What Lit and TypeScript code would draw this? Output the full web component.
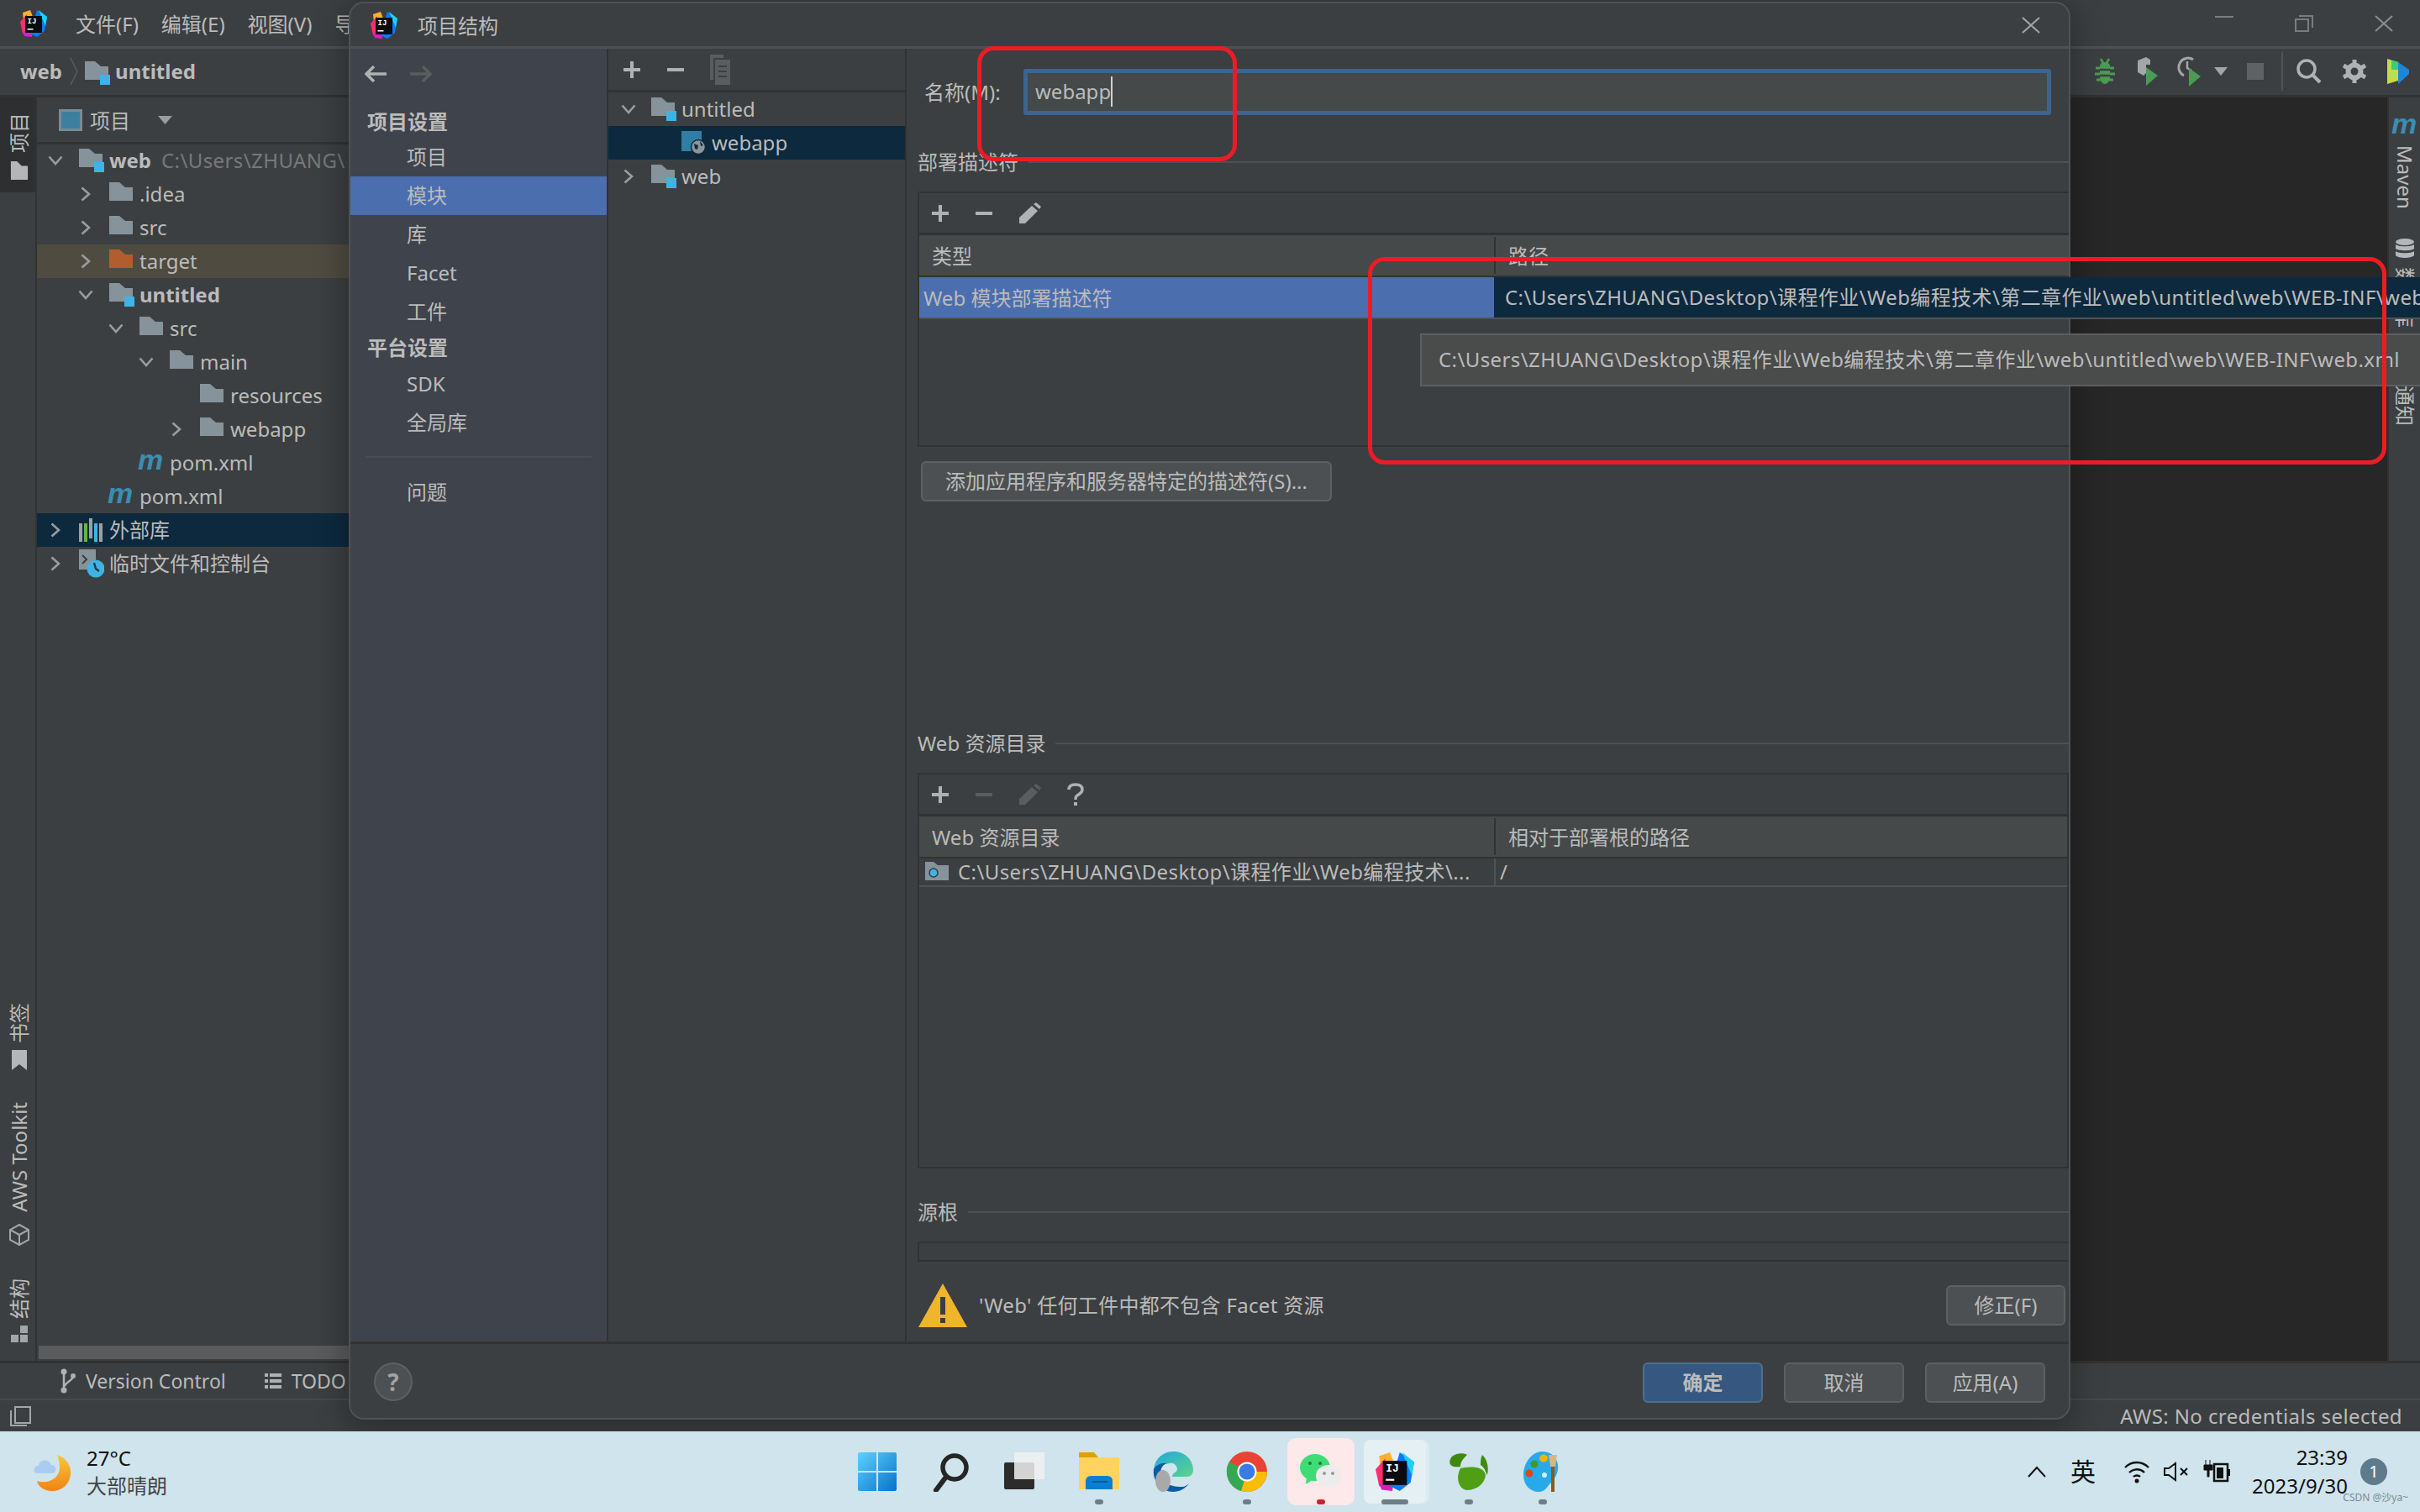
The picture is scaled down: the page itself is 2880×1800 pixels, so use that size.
import { LitElement, css, html } from 'lit';
import { customElement } from 'lit/decorators.js';

const PATH = 'C:\\Users\\ZHUANG\\Desktop\\课程作业\\Web编程技术\\第二章作业\\web\\untitled\\web\\WEB-INF\\web.xml';

type Chev = 'down' | 'right' | null;
interface Row {
  lvl: number;
  chev: Chev;
  icon: string;
  name: string;
  bold?: boolean;
  hint?: string;
  cls?: string;
}

const TREE: Row[] = [
  { lvl: 0, chev: 'down', icon: 'module', name: 'web', bold: true, hint: 'C:\\Users\\ZHUANG\\' },
  { lvl: 1, chev: 'right', icon: 'folder', name: '.idea' },
  { lvl: 1, chev: 'right', icon: 'folder', name: 'src' },
  { lvl: 1, chev: 'right', icon: 'orange', name: 'target', cls: 'ignored' },
  { lvl: 1, chev: 'down', icon: 'module', name: 'untitled', bold: true },
  { lvl: 2, chev: 'down', icon: 'folder', name: 'src' },
  { lvl: 3, chev: 'down', icon: 'folder', name: 'main' },
  { lvl: 4, chev: null, icon: 'folder', name: 'resources' },
  { lvl: 4, chev: 'right', icon: 'folder', name: 'webapp' },
  { lvl: 2, chev: null, icon: 'm', name: 'pom.xml' },
  { lvl: 1, chev: null, icon: 'm', name: 'pom.xml' },
  { lvl: 0, chev: 'right', icon: 'lib', name: '外部库', cls: 'picked' },
  { lvl: 0, chev: 'right', icon: 'scratch', name: '临时文件和控制台' },
];

const MODULES: Row[] = [
  { lvl: 0, chev: 'down', icon: 'module', name: 'untitled' },
  { lvl: 1, chev: null, icon: 'web', name: 'webapp', cls: 'picked' },
  { lvl: 0, chev: 'right', icon: 'module', name: 'web' },
];

const chevron = (c: Chev) => {
  if (c === 'down') {
    return html`<svg width="18" height="12" viewBox="0 0 18 12"><path d="M1.5 1.5 9 10l7.5-8.5" fill="none" stroke="#9a9da0" stroke-width="2.6"/></svg>`;
  }
  if (c === 'right') {
    return html`<svg width="12" height="18" viewBox="0 0 12 18"><path d="M1.5 1.5 10 9l-8.5 7.5" fill="none" stroke="#9a9da0" stroke-width="2.6"/></svg>`;
  }
  return null;
};

const folderPath = 'M0 0h12l7 6h9v16H0z';

const treeIcon = (name: string) => {
  switch (name) {
    case 'folder':
      return html`<svg width="30" height="28" viewBox="0 0 30 28"><path d=${folderPath} fill="#87939a"/></svg>`;
    case 'orange':
      return html`<svg width="30" height="28" viewBox="0 0 30 28"><path d=${folderPath} fill="#b35c2e"/></svg>`;
    case 'module':
      return html`<svg width="30" height="28" viewBox="0 0 30 28"><path d=${folderPath} fill="#87939a"/><rect x="18" y="16" width="12" height="12" fill="#3eb4e5"/></svg>`;
    case 'm':
      return html`<svg width="32" height="38" viewBox="0 0 32 38"><text x="0" y="27" font-family="Liberation Sans" font-size="34" font-weight="700" font-style="italic" fill="#3a8db3">m</text></svg>`;
    case 'lib':
      return html`<svg width="30" height="28" viewBox="0 0 30 28"><rect x="0" y="6" width="4" height="24" fill="#9aa0a4"/><rect x="6" y="6" width="4" height="24" fill="#62b543"/><rect x="12" y="0" width="4" height="24" fill="#9aa0a4"/><rect x="18" y="6" width="4" height="24" fill="#3eb4e5"/><rect x="24" y="6" width="4" height="24" fill="#9aa0a4"/></svg>`;
    case 'scratch':
      return html`<svg width="30" height="34" viewBox="0 0 30 34"><rect x="0" y="0" width="20" height="24" fill="#87939a"/><path d="M4 7l5 5-5 5" fill="none" stroke="#3c3f41" stroke-width="2"/><circle cx="20" cy="23" r="10.5" fill="#3eb4e5"/><path d="M18 16l2 7 4 3" fill="none" stroke="#23384a" stroke-width="2.4"/></svg>`;
    case 'web':
      return html`<svg width="30" height="28" viewBox="0 0 30 28"><rect x="0" y="0" width="24" height="24" fill="#2f7ea6"/><circle cx="20" cy="19" r="8.5" fill="#8b969c" stroke="#0d293e" stroke-width="1.5"/><path d="M15 15l5 2-1 5-3-1zM22 12l4 5-3 1z" fill="#0d293e"/></svg>`;
  }
  return null;
};

const ijLogo = (s: number) => html`<svg width=${s} height=${s} viewBox="0 0 32 32">
  <polygon points="3,3 12,0 15,8 4,13" fill="#ffb02e"/>
  <polygon points="0,14 8,5 9,28 3,28" fill="#fe2e6e"/>
  <polygon points="3,26 15,22 14,32 5,31" fill="#e01cc4"/>
  <polygon points="20,0 32,8 29,25 20,32 12,28" fill="#087cfa"/>
  <polygon points="22,0 32,8 30,19" fill="#21d0f5"/>
  <rect x="6" y="7" width="20" height="20" fill="#0b0b10"/>
  <text x="8.500" y="16" font-family="Liberation Mono" font-weight="700" font-size="9" fill="#fff">IJ</text>
  <rect x="8.500" y="22" width="7" height="1.500" fill="#fff"/>
</svg>`;

const plus = (c = '#afb1b3') => html`<svg width="22" height="22" viewBox="0 0 22 22"><path d="M11 1v20M1 11h20" stroke=${c} stroke-width="4"/></svg>`;
const minus = (c = '#afb1b3') => html`<svg width="22" height="22" viewBox="0 0 22 22"><path d="M1 11h20" stroke=${c} stroke-width="4"/></svg>`;
const pencil = (c = '#afb1b3') => html`<svg width="28" height="26" viewBox="0 0 28 26"><path d="M1 25v-7L16 4l7 6L8 25zM18 2l3-2 6 5-2 3z" fill=${c}/></svg>`;

@customElement('app-root')
export class AppRoot extends LitElement {
  static styles = css`
    :host {
      display: block;
      width: 2880px;
      height: 1800px;
      overflow: hidden;
      font-family: 'Noto Sans', 'Noto Sans CJK SC', sans-serif;
      font-size: 24px;
      line-height: 1;
      color: #bbbbbb;
    }
    svg { display: block; flex: none; }

    .ide {
      position: relative;
      height: 1704px;
      overflow: hidden;
      display: flex;
      flex-direction: column;
      background: #3c3f41;
    }
    .titlebar {
      height: 55px;
      flex: none;
      border-bottom: 3px solid #4e5052;
      display: flex;
      align-items: center;
      padding-left: 24px;
    }
    .menus { display: flex; gap: 27px; margin-left: 34px; padding-top: 2px; }
    .winctl { margin-left: auto; display: flex; margin-right: -4px; }
    .winctl div { width: 95px; display: flex; justify-content: center; }
    .navbar {
      height: 53px;
      padding-bottom: 2px;
      flex: none;
      border-bottom: 3px solid #323232;
      display: flex;
      align-items: center;
      padding-left: 24px;
      font-weight: 700;
    }
    .navbar .sep { margin: 0 8px 0 9px; }
    .navbar .mod { margin-right: 6px; margin-top: 4px; }
    .tools { margin-left: auto; display: flex; align-items: center; }
    .tools div { display: flex; justify-content: center; align-items: center; }

    .main { flex: 1; display: flex; min-height: 0; }
    .lstripe {
      width: 38px;
      padding-left: 4px;
      flex: none;
      border-right: 2px solid #323232;
      display: flex;
      flex-direction: column;
      align-items: center;
      font-size: 24px;
    }
    .lstripe .active {
      width: 42px;
      margin-left: -4px;
      padding-left: 4px;
      height: 113px;
      background: #2d2f30;
      display: flex;
      flex-direction: column;
      align-items: center;
      padding-top: 18px;
      box-sizing: border-box;
      gap: 10px;
    }
    .vtext {
      writing-mode: vertical-rl;
      text-orientation: sideways;
      transform: rotate(180deg);
      white-space: nowrap;
    }
    .lbottom {
      margin-top: auto;
      display: flex;
      flex-direction: column;
      align-items: center;
      padding-bottom: 22px;
    }
    .lbottom .gap-s { margin-top: 8px; }
    .lbottom .gap-m { margin-top: 13px; }
    .lbottom .gap-l { margin-top: 38px; }
    .project { width: 400px; flex: none; display: flex; flex-direction: column; }
    .phead {
      height: 53px;
      flex: none;
      border-bottom: 3px solid #323232;
      display: flex;
      align-items: center;
      padding-left: 26px;
      gap: 9px;
    }
    .phead span { padding-top: 2px; }
    .phead svg:last-child { margin-left: 24px; }
    .ptree { flex: 1; min-height: 0; overflow: hidden; margin-top: -1px; }
    .row {
      height: 40px;
      display: flex;
      align-items: center;
      white-space: nowrap;
      box-sizing: border-box;
    }
    .row .slot {
      width: 36px;
      flex: none;
      display: flex;
      justify-content: center;
    }
    .row .ic { margin: 0 6px 0 10px; flex: none; width: 30px; display: flex; justify-content: flex-start; }
    .row .ic.m { margin-left: 8px; margin-right: 8px; }
    .row b { font-weight: 700; }
    .row i { font-style: normal; color: #787878; margin-left: 12px; letter-spacing: 0.4px; }
    .row.picked { background: #0d293e; }
    .row.ignored { background: #4f4b41; }
    .ptree .row { padding-left: 4px; }
    .scrollbar { height: 16px; flex: none; margin: 0 0 2px 2px; background: #595b5d; }
    .editor { flex: 1; background: #272727; }
    .rstripe {
      width: 37px;
      flex: none;
      border-left: 2px solid #323232;
      display: flex;
      flex-direction: column;
      align-items: center;
      padding-top: 16px;
      font-size: 24px;
    }
    .rtext { writing-mode: vertical-rl; text-orientation: sideways; white-space: nowrap; }
    .rstripe .maven { margin-top: 3px; }
    .rstripe .db { margin-top: 35px; }
    .rstripe .dbname { margin-top: 10px; height: 86px; overflow: hidden; }
    .rstripe .notice { margin-top: 55px; }
    .bottombar {
      height: 42px;
      flex: none;
      border-top: 3px solid #323232;
      display: flex;
      align-items: center;
      padding-left: 72px;
      font-size: 23px;
    }
    .bottombar .lab { margin-left: 12px; margin-right: 46px; }
    .statusbar {
      height: 37px;
      flex: none;
      border-top: 2px solid #484a4c;
      display: flex;
      align-items: center;
      justify-content: space-between;
      padding: 0 21px 0 12px;
      letter-spacing: 0.4px;
    }

    /* dialog */
    .dialog {
      position: absolute;
      left: 415px;
      top: 2px;
      width: 2049px;
      height: 1688px;
      box-sizing: border-box;
      background: #3c3f41;
      border: 2px solid #4f5153;
      border-radius: 18px;
      box-shadow: 0 6px 34px 6px rgba(0, 0, 0, 0.28);
      overflow: hidden;
      display: flex;
      flex-direction: column;
    }
    .dtitle {
      height: 51px;
      flex: none;
      border-bottom: 3px solid #4e5052;
      display: flex;
      align-items: center;
      padding-left: 24px;
      gap: 24px;
    }
    .dtitle span { padding-top: 2px; }
    .dtitle .x { margin-left: auto; margin-right: 34px; }
    .dbody {
      flex: 1;
      min-height: 0;
      display: grid;
      grid-template-columns: 307px 355px 1fr;
    }
    .nav {
      background: #3f434c;
      border-right: 2px solid #323232;
      box-sizing: content-box;
      width: 305px;
    }
    .navtop { height: 60px; display: flex; align-items: center; gap: 28px; padding-left: 17px; }
    .nav h4 { margin: 0; font-size: 24px; font-weight: 700; height: 40px; line-height: 40px; padding-left: 20px; }
    .nav a { display: block; height: 46px; line-height: 46px; padding-left: 67px; }
    .nav a.on { background: #4b6eaf; }
    .nav h4.first { margin-top: 8px; height: 38px; line-height: 38px; }
    .nav hr { border: 0; border-top: 2px solid #494c52; margin: 17px 18px 18px 18px; }
    .modules { border-right: 2px solid #323232; }
    .modbar {
      height: 49px;
      border-bottom: 3px solid #323232;
      display: flex;
      align-items: center;
      gap: 30px;
      padding-left: 17px;
    }
    .modules .row .ic { margin: 0 6px 0 9px; }
    .modules .row { padding-left: 6px; }
    .modules .row.picked { padding-left: 2px; }
    .modules .row.picked .ic { margin-left: 13px; margin-right: 6px; }
    .content { display: flex; flex-direction: column; padding: 24px 0 0 13px; min-width: 0; }
    .namerow { display: flex; align-items: center; height: 55px; margin-left: 8px; }
    .namerow label { width: 118px; flex: none; }
    .input {
      width: 1223px;
      height: 55px;
      box-sizing: border-box;
      background: #45494a;
      border: 5px solid #3c6491;
      border-radius: 3px;
      display: flex;
      align-items: center;
      padding: 0 0 2px 9px;
    }
    .input span { border-right: 2px solid #d0d0d0; line-height: 36px; }
    .section { display: flex; align-items: center; gap: 12px; height: 36px; flex: none; }
    .section::after { content: ''; flex: 1; border-top: 2px solid #4e5052; }
    .s1 { margin-top: 38px; }
    .s2 { margin-top: 270px; }
    .s3 { margin-top: 34px; }
    .panel {
      margin-top: 17px;
      border: solid #323232;
      border-width: 2px 0 2px 2px;
      box-sizing: border-box;
      flex: none;
    }
    .p1 { height: 304px; }
    .p2 { height: 471px; border-right-width: 2px; }
    .p3 { height: 24px; }
    .tbar {
      height: 47px;
      border-bottom: 3px solid #323232;
      display: flex;
      align-items: center;
      padding-left: 14px;
      gap: 30px;
    }
    .thead {
      height: 48px;
      display: grid;
      grid-template-columns: 684px 1fr;
      background: #45494a;
      border-bottom: 2px solid #323232;
      align-items: center;
    }
    .thead div { padding: 2px 0 0 15px; }
    .thead div + div { border-left: 2px solid #323232; height: 44px; line-height: 42px; box-sizing: border-box; }
    .trow {
      height: 48px;
      display: grid;
      grid-template-columns: 684px 1fr;
      align-items: center;
      border-bottom: 2px solid #505355;
    }
    .trow .sel { background: #4b6eaf; height: 100%; box-sizing: border-box; display: flex; align-items: center; padding: 2px 0 0 5px; }
    .trow .dark { background: #0d293e; height: 100%; }
    .trow2 {
      height: 32px;
      display: grid;
      grid-template-columns: 684px 1fr;
      align-items: center;
      border-bottom: 2px solid #505355;
      white-space: nowrap;
    }
    .trow2 .cell { display: flex; align-items: center; gap: 9px; padding-left: 7px; }
    .trow2 .cell span { letter-spacing: 0.4px; }
    .trow2 .cell + .cell { padding-left: 5px; border-left: 2px solid #505355; height: 100%; }
    .btn {
      height: 48px;
      box-sizing: border-box;
      background: #4c5052;
      border: 2px solid #5e6060;
      border-radius: 6px;
      display: flex;
      align-items: center;
      justify-content: center;
      white-space: nowrap;
    }
    .btn.add { width: 489px; margin: 17px 0 0 4px; flex: none; }
    .btn.main-btn { background: #365880; border-color: #4c708c; font-weight: 700; }
    .warn { display: flex; align-items: center; margin-top: 25px; height: 53px; flex: none; }
    .warn span { margin-left: 13px; letter-spacing: 0.3px; }
    .warn .btn { margin-left: auto; margin-right: 4px; width: 142px; }
    .dfoot {
      height: 91px;
      flex: none;
      border-top: 3px solid #323232;
      display: flex;
      align-items: flex-start;
      padding: 22px 28px 0 28px;
      box-sizing: border-box;
      gap: 25px;
    }
    .dfoot .btn { width: 143px; }
    .dfoot .help {
      width: 46px;
      height: 46px;
      box-sizing: border-box;
      border-radius: 50%;
      background: #4c5052;
      border: 2px solid #5e6060;
      display: flex;
      align-items: center;
      justify-content: center;
      font-weight: 700;
      font-size: 28px;
      color: #a0a3a5;
      margin-right: auto;
    }

    /* overlays */
    .expand {
      position: absolute;
      left: 1779px;
      top: 330px;
      right: 0;
      height: 48px;
      background: #0d293e;
      border-bottom: 2px solid #505355;
      display: flex;
      align-items: center;
      padding-left: 12px;
      white-space: nowrap;
      overflow: hidden;
      box-sizing: content-box;
      letter-spacing: 0.4px;
    }
    .tip {
      position: absolute;
      left: 1690px;
      top: 397px;
      right: 0;
      height: 63px;
      box-sizing: border-box;
      background: #4a4b4b;
      border: 2px solid #5e5e5e;
      border-right: 0;
      display: flex;
      align-items: center;
      padding: 0 0 2px 20px;
      white-space: nowrap;
      letter-spacing: 0.4px;
    }
    .mark {
      position: absolute;
      box-sizing: border-box;
      border: 5px solid #ed1c24;
      border-radius: 20px;
    }
    .m1 { left: 1163px; top: 55px; width: 309px; height: 137px; }
    .m2 { left: 1628px; top: 306px; width: 1212px; height: 247px; }

    /* taskbar */
    .taskbar {
      height: 96px;
      background: #cfe4ec;
      display: grid;
      grid-template-columns: 1fr 880px 1fr;
      align-items: stretch;
      color: #111;
    }
    .weather { display: flex; align-items: center; padding-left: 40px; gap: 18px; }
    .weather .lines { display: flex; flex-direction: column; gap: 9px; }
    .weather .sub { color: #444; }
    .apps { display: grid; grid-template-columns: repeat(10, 88px); }
    .app {
      position: relative;
      display: flex;
      align-items: center;
      justify-content: center;
    }
    .app.wechat::before {
      content: '';
      position: absolute;
      left: 4px;
      right: 4px;
      top: 8px;
      bottom: 8px;
      background: #fde8ea;
      border-radius: 10px;
    }
    .app.idea::before {
      content: '';
      position: absolute;
      left: 7px;
      right: 7px;
      top: 10px;
      bottom: 10px;
      background: #e4f0f4;
      border-radius: 8px;
      box-shadow: 4px 0 0 #dcebf1;
    }
    .app svg { position: relative; }
    .dot {
      position: absolute;
      bottom: 9px;
      left: 50%;
      width: 10px;
      height: 6px;
      margin-left: -5px;
      border-radius: 3px;
      background: #6f7d85;
    }
    .dot.red { background: #c4262e; }
    .dot.wide { width: 32px; margin-left: -16px; }
    .tray { display: flex; align-items: center; justify-content: flex-end; padding-right: 39px; position: relative; }
    .tray .ying { font-size: 30px; margin: 0 33px 0 28px; }
    .tray .speaker { margin-left: 16px; }
    .tray .batt { margin-left: 17px; }
    .tray .clock { display: flex; flex-direction: column; align-items: flex-end; gap: 10px; margin: 0 15px 0 26px; }
    .tray .badge {
      width: 32px;
      height: 32px;
      border-radius: 50%;
      background: #5f7a8b;
      color: #fff;
      display: flex;
      align-items: center;
      justify-content: center;
      font-size: 20px;
    }
    .tray .wm {
      position: absolute;
      right: 14px;
      bottom: 11px;
      font-size: 12px;
      color: #7d8a91;
    }
  `;

  renderRow(r: Row) {
    const step = 36 * r.lvl;
    const m = r.icon === 'm';
    return html`<div class="row ${r.cls ?? ''}">
      <div style="width:${step}px;flex:none"></div>
      <div class="slot">${chevron(r.chev)}</div>
      <div class="ic ${m ? 'm' : ''}">${treeIcon(r.icon)}</div>
      ${r.bold ? html`<b>${r.name}</b>` : html`<span>${r.name}</span>`}
      ${r.hint ? html`<i>${r.hint}</i>` : null}
    </div>`;
  }

  renderTools() {
    const slots: [number, unknown][] = [
      [50, html`<svg width="26" height="32" viewBox="0 0 26 32"><path d="M8 1l3 5M18 1l-3 5" stroke="#499c54" stroke-width="2.500"/><path d="M13 5c4 0 6 2 6 5v12c0 5-3 9-6 9s-6-4-6-9V10c0-3 2-5 6-5z" fill="#499c54"/><path d="M2 12h5M19 12h5M1 19h6M19 19h6M3 26h5M18 26h5" stroke="#499c54" stroke-width="3"/><path d="M7 14h12M7 21h12" stroke="#3c3f41" stroke-width="2.500"/></svg>`],
      [52, html`<svg width="28" height="38" viewBox="0 0 28 38"><path d="M2 6l10-4 5 3v6h-5v10l-3 3-7-4z" fill="#a3a6a8"/><path d="M12 14l14 10-14 12z" fill="#499c54"/></svg>`],
      [48, html`<svg width="30" height="38" viewBox="0 0 30 38"><path d="M19 5A11 11 0 1 0 8 24" fill="none" stroke="#a3a6a8" stroke-width="3"/><path d="M12 7v8l5 3" fill="none" stroke="#a3a6a8" stroke-width="2.500"/><path d="M14 15l14 10-14 12z" fill="#499c54"/></svg>`],
      [26, html`<svg width="16" height="10" viewBox="0 0 16 10"><path d="M0 0h16L8 10z" fill="#a3a6a8"/></svg>`],
      [56, html`<svg width="20" height="20" viewBox="0 0 20 20"><rect width="20" height="20" fill="#5f6163"/></svg>`],
      [8, html`<svg width="2" height="46" viewBox="0 0 2 46"><rect width="2" height="46" fill="#515355"/></svg>`],
      [56, html`<svg width="32" height="32" viewBox="0 0 32 32"><circle cx="13" cy="13" r="10" fill="none" stroke="#afb1b3" stroke-width="3.500"/><path d="M20 20l9 9" stroke="#afb1b3" stroke-width="4"/></svg>`],
      [52, html`<svg width="28" height="28" viewBox="0 0 28 28"><circle cx="14" cy="14" r="7.500" fill="none" stroke="#afb1b3" stroke-width="6"/><path d="M14 0v6M14 22v6M1 7l5 3M22 18l5 3M1 21l5-3M22 10l5-3" stroke="#afb1b3" stroke-width="5"/></svg>`],
      [52, html`<svg width="28" height="30" viewBox="0 0 28 30"><path d="M1 0 14 4v22L1 30z" fill="#c2dc4a"/><path d="M14 4l13 9v5L14 30z" fill="#1c87d9"/><path d="M6 2l8 2v9H6z" fill="#3ec97c"/></svg>`],
    ];
    return html`<div class="tools">${slots.map(([w, ic]) => html`<div style="width:${w}px">${ic}</div>`)}</div>`;
  }

  renderApps() {
    return html`<div class="apps">
      <div class="app"><svg width="46" height="46" viewBox="0 0 46 46">
        <defs><linearGradient id="win" x1="0" y1="0" x2="1" y2="1"><stop offset="0" stop-color="#5fd2ff"/><stop offset="1" stop-color="#0672c9"/></linearGradient></defs>
        <path d="M0 2a2 2 0 0 1 2-2h20v22H0zM24 0h20a2 2 0 0 1 2 2v20H24zM0 24h22v22H2a2 2 0 0 1-2-2zM24 24h22v20a2 2 0 0 1-2 2H24z" fill="url(#win)"/></svg></div>
      <div class="app"><svg width="46" height="48" viewBox="0 0 46 48"><circle cx="27" cy="19" r="14" fill="none" stroke="#262626" stroke-width="5.500"/><path d="M17 30 5 46" stroke="#262626" stroke-width="6" stroke-linecap="round"/></svg></div>
      <div class="app"><svg width="50" height="46" viewBox="0 0 50 46"><rect x="0" y="12" width="36" height="32" rx="2" fill="#2c2c2c"/><rect x="12" y="0" width="36" height="32" rx="1" fill="#f1f1f1" opacity=".85"/></svg></div>
      <div class="app"><svg width="48" height="46" viewBox="0 0 48 46"><path d="M0 0h18l5 6H0z" fill="#dda200"/><rect x="0" y="6" width="48" height="38" rx="1" fill="#ffd35e"/><path d="M8 44V34c0-4 3-6 7-6h18c4 0 7 2 7 6v10z" fill="#0a7fd1"/><rect x="16" y="34" width="18" height="2" fill="#075a96"/></svg><div class="dot"></div></div>
      <div class="app"><svg width="50" height="50" viewBox="0 0 50 50">
        <defs><linearGradient id="edge" x1="0" y1="0" x2="1" y2="1"><stop offset="0" stop-color="#1fa8e0"/><stop offset="1" stop-color="#5fd38a"/></linearGradient></defs>
        <path d="M2 22C4 8 14 1 26 1c13 0 23 10 23 22 0 5-3 8-8 8H24c0-5 6-5 6-9 0-4-4-8-9-7-8 1-14 5-19 7z" fill="url(#edge)"/>
        <path d="M2 22c3-5 9-8 15-7-6 3-8 9-6 15 2 8 12 14 25 13 3 0 6-2 8-4-4 6-11 10-19 10C12 49 0 36 2 22z" fill="#0b5ca8"/>
        <ellipse cx="13" cy="36" rx="9" ry="13" fill="#a9a9a9"/></svg></div>
      <div class="app"><svg width="50" height="50" viewBox="0 0 50 50"><circle cx="25" cy="25" r="24" fill="#ea4335"/><path d="M25 25 4 13A24 24 0 0 0 18 48z" fill="#34a853"/><path d="M25 25 49 25A24 24 0 0 1 18 48z" fill="#fbbc04"/><circle cx="25" cy="25" r="11.500" fill="#fff"/><circle cx="25" cy="25" r="9.500" fill="#3b7ce4"/></svg><div class="dot"></div></div>
      <div class="app wechat"><svg width="50" height="44" viewBox="0 0 50 44"><ellipse cx="18" cy="17" rx="18" ry="16" fill="#3fdc75"/><path d="M8 28l-1 9 9-6z" fill="#3fdc75"/><ellipse cx="34" cy="27" rx="15" ry="13" fill="#ececec"/><path d="M40 37l4 6-10-4z" fill="#ececec"/><circle cx="12" cy="12" r="2" fill="#1e7a3f"/><circle cx="24" cy="12" r="2" fill="#1e7a3f"/><circle cx="29" cy="24" r="2" fill="#9a9a9a"/><circle cx="39" cy="24" r="2" fill="#9a9a9a"/></svg><div class="dot red"></div></div>
      <div class="app idea">${ijLogo(46)}<div class="dot wide"></div></div>
      <div class="app"><svg width="48" height="44" viewBox="0 0 48 44"><path d="M21 44C12 42 8 30 14 18c8-2 28-4 30 8-1 10-10 18-23 18z" fill="#4f9e14"/><path d="M14 16C0 18-1 10 4 4 8 0 18-1 22 2c-4 4-8 8-8 14zM38 14c0-4 0-8 2-12 6 6 8 14 6 24-2-4-4-10-8-12z" fill="#3f8a0e"/></svg><div class="dot"></div></div>
      <div class="app"><svg width="46" height="48" viewBox="0 0 46 48"><path d="M22 0C10 0 0 14 0 28c0 12 8 20 18 20 8 0 10-6 14-10 6-6 12-16 8-26C38 4 30 0 22 0z" fill="#28a9ea"/><circle cx="13" cy="15" r="4.500" fill="#3f9a2c"/><ellipse cx="24" cy="8" rx="5" ry="4.500" fill="#f1b500"/><circle cx="7" cy="26" r="4.500" fill="#d8491f"/><circle cx="25" cy="28" r="3" fill="#d6ecf7"/><rect x="33" y="18" width="4" height="30" fill="#8a5a1c"/><path d="M30 4h10l-2 14h-6z" fill="#d9b778"/></svg><div class="dot"></div></div>
    </div>`;
  }

  render() {
    return html`
      <div class="ide">
        <div class="titlebar">
          ${ijLogo(32)}
          <div class="menus"><span>文件(F)</span><span>编辑(E)</span><span>视图(V)</span><span>导</span></div>
          <div class="winctl">
            <div><svg width="22" height="4" viewBox="0 0 22 4"><rect width="22" height="2" y="1" fill="#7a7c7e"/></svg></div>
            <div><svg width="22" height="20" viewBox="0 0 22 20"><path d="M5 1h16v14M1 5h15v14H1z" fill="none" stroke="#7a7c7e" stroke-width="2"/></svg></div>
            <div><svg width="22" height="20" viewBox="0 0 22 20"><path d="M1 1l20 18M21 1 1 19" stroke="#8b8d8f" stroke-width="2"/></svg></div>
          </div>
        </div>
        <div class="navbar">
          <span>web</span>
          <svg class="sep" width="10" height="32" viewBox="0 0 10 32"><path d="M1 0l8 16-8 16" fill="none" stroke="#5a5d5f" stroke-width="1.500"/></svg>
          <span class="mod">${treeIcon('module')}</span>
          <span>untitled</span>
          ${this.renderTools()}
        </div>
        <div class="main">
          <div class="lstripe">
            <div class="active">
              <span class="vtext">项目</span>
              <svg width="22" height="22" viewBox="0 0 24 24"><path d="M1 0h8l6 6h8v18H1z" fill="#b4b6b8"/></svg>
            </div>
            <div class="lbottom">
              <span class="vtext">书签</span>
              <svg class="gap-s" width="18" height="24" viewBox="0 0 18 24"><path d="M0 0h18v24l-9-7-9 7z" fill="#b4b6b8"/></svg>
              <span class="vtext gap-l">AWS Toolkit</span>
              <svg class="gap-m" width="26" height="28" viewBox="0 0 26 28"><path d="M13 2l11 6v12l-11 6-11-6V8zM2 8l11 6 11-6M13 14v12" fill="none" stroke="#a3a6a8" stroke-width="2"/></svg>
              <span class="vtext gap-l">结构</span>
              <svg class="gap-s" width="20" height="20" viewBox="0 0 20 20"><path d="M11 0h9v9h-9zM0 11h9v9H0zM11 11h9v9h-9z" fill="#a3a6a8"/></svg>
            </div>
          </div>
          <div class="project">
            <div class="phead">
              <svg width="28" height="26" viewBox="0 0 28 26"><rect x="1.500" y="1.500" width="25" height="23" fill="#3d7f9f" stroke="#7b8a93" stroke-width="3"/></svg>
              <span>项目</span>
              <svg width="17" height="10" viewBox="0 0 17 10"><path d="M0 0h17l-8.500 10z" fill="#9a9da0"/></svg>
            </div>
            <div class="ptree">${TREE.map((r) => this.renderRow(r))}</div>
            <div class="scrollbar"></div>
          </div>
          <div class="editor"></div>
          <div class="rstripe">
            ${treeIcon('m')}
            <span class="rtext maven">Maven</span>
            <svg class="db" width="26" height="24" viewBox="0 0 26 24"><ellipse cx="13" cy="4" rx="11" ry="4" fill="#b4b6b8"/><path d="M2 7c3 3 19 3 22 0v5c-3 3-19 3-22 0zM2 15c3 3 19 3 22 0v5c-3 4-19 4-22 0z" fill="#b4b6b8"/></svg>
            <span class="rtext dbname">数据库</span>
            <span class="rtext notice">通知</span>
          </div>
        </div>
        <div class="bottombar">
          <svg width="18" height="30" viewBox="0 0 18 30"><circle cx="4" cy="4" r="3.500" fill="#afb1b3"/><circle cx="4" cy="26" r="3.500" fill="#afb1b3"/><circle cx="15" cy="9" r="3" fill="#afb1b3"/><path d="M4 4v22M15 9c0 6-8 6-10 12" fill="none" stroke="#afb1b3" stroke-width="2.500"/></svg>
          <span class="lab">Version Control</span>
          <svg width="20" height="22" viewBox="0 0 20 22"><path d="M0 2h4v4H0zM6 2h14v4H6zM0 9h4v4H0zM6 9h14v4H6zM0 16h4v4H0zM6 16h14v4H6z" fill="#afb1b3"/></svg>
          <span class="lab">TODO</span>
        </div>
        <div class="statusbar">
          <svg width="26" height="24" viewBox="0 0 26 24"><path d="M6 1h18v19H6zM1 5v18h19" fill="none" stroke="#a3a6a8" stroke-width="2"/></svg>
          <span>AWS: No credentials selected</span>
        </div>

        <div class="dialog">
          <div class="dtitle">
            ${ijLogo(32)}
            <span>项目结构</span>
            <svg class="x" width="22" height="20" viewBox="0 0 22 20"><path d="M1 1l20 18M21 1 1 19" stroke="#a3a6a8" stroke-width="2"/></svg>
          </div>
          <div class="dbody">
            <div class="nav">
              <div class="navtop">
                <svg width="26" height="20" viewBox="0 0 26 20"><path d="M26 10H3M11 1 2 10l9 9" fill="none" stroke="#afb1b3" stroke-width="3.500"/></svg>
                <svg width="26" height="20" viewBox="0 0 26 20"><path d="M0 10h23M15 1l9 9-9 9" fill="none" stroke="#5a5d5f" stroke-width="3.500"/></svg>
              </div>
              <h4 class="first">项目设置</h4>
              <a>项目</a>
              <a class="on">模块</a>
              <a>库</a>
              <a>Facet</a>
              <a>工件</a>
              <h4>平台设置</h4>
              <a>SDK</a>
              <a>全局库</a>
              <hr />
              <a>问题</a>
            </div>
            <div class="modules">
              <div class="modbar">
                ${plus()} ${minus()}
                <svg width="24" height="36" viewBox="0 0 24 36"><path d="M0 0h16v4H4v26H0z" fill="#5a5d5f"/><path d="M6 6h18v30H6z" fill="#5a5d5f"/><path d="M10 14h10M10 20h10M10 26h10" stroke="#3c3f41" stroke-width="2"/></svg>
              </div>
              ${MODULES.map((r) => this.renderRow(r))}
            </div>
            <div class="content">
              <div class="namerow">
                <label>名称(M):</label>
                <div class="input"><span>webapp</span></div>
              </div>
              <div class="section s1">部署描述符</div>
              <div class="panel p1">
                <div class="tbar">${plus()} ${minus()} ${pencil()}</div>
                <div class="thead"><div>类型</div><div>路径</div></div>
                <div class="trow"><div class="sel">Web 模块部署描述符</div><div class="dark"></div></div>
              </div>
              <div class="btn add">添加应用程序和服务器特定的描述符(S)...</div>
              <div class="section s2">Web 资源目录</div>
              <div class="panel p2">
                <div class="tbar">
                  ${plus()} ${minus('#5a5d5f')} ${pencil('#5a5d5f')}
                  <svg width="20" height="28" viewBox="0 0 20 28"><path d="M2 8c0-4 3-6 8-6s8 2 8 6-3 5-6 7c-2 1-2 3-2 5" fill="none" stroke="#afb1b3" stroke-width="3.500"/><rect x="8" y="23" width="4" height="4" fill="#afb1b3"/></svg>
                </div>
                <div class="thead"><div>Web 资源目录</div><div>相对于部署根的路径</div></div>
                <div class="trow2">
                  <div class="cell">
                    <svg width="30" height="24" viewBox="0 0 30 24"><path d="M0 0h10l5 4h13v18H0z" fill="#87939a"/><circle cx="10" cy="13" r="5" fill="#3eb4e5" stroke="#2c3e4a" stroke-width="1.500"/></svg>
                    <span>C:\\Users\\ZHUANG\\Desktop\\课程作业\\Web编程技术\\...</span>
                  </div>
                  <div class="cell">/</div>
                </div>
              </div>
              <div class="section s3">源根</div>
              <div class="panel p3"></div>
              <div class="warn">
                <svg width="60" height="54" viewBox="0 0 60 54"><path d="M30 1 59 53H1z" fill="#f0b52c"/><rect x="27" y="17" width="6" height="21" fill="#3c3f41"/><rect x="27" y="42" width="6" height="6" fill="#3c3f41"/></svg>
                <span>'Web' 任何工件中都不包含 Facet 资源</span>
                <div class="btn">修正(F)</div>
              </div>
            </div>
          </div>
          <div class="dfoot">
            <div class="help">?</div>
            <div class="btn main-btn">确定</div>
            <div class="btn">取消</div>
            <div class="btn">应用(A)</div>
          </div>
        </div>

        <div class="expand">${PATH}</div>
        <div class="tip">${PATH}</div>
        <div class="mark m1"></div>
        <div class="mark m2"></div>
      </div>
      <div class="taskbar">
        <div class="weather">
          <svg width="45" height="46" viewBox="0 0 45 46">
            <defs><linearGradient id="moon" x1="0" y1="0" x2="0" y2="1"><stop offset="0" stop-color="#f4c93a"/><stop offset="1" stop-color="#f28216"/></linearGradient></defs>
            <path d="M28 3c10 3 17 12 16 23-1 12-10 20-22 20C12 46 5 40 4 34c12 4 26-2 27-15 0-6-1-11-3-16z" fill="url(#moon)"/>
            <path d="M4 25c-5 0-5-9 2-9 0-8 13-9 15-1 7 0 7 10 1 10z" fill="#a9cdf0"/>
          </svg>
          <div class="lines"><span>27°C</span><span class="sub">大部晴朗</span></div>
        </div>
        ${this.renderApps()}
        <div class="tray">
          <svg width="24" height="14" viewBox="0 0 24 14"><path d="M2 13 12 2l10 11" fill="none" stroke="#111" stroke-width="2"/></svg>
          <span class="ying">英</span>
          <svg width="32" height="28" viewBox="0 0 32 28"><path d="M2 9c8-8 20-8 28 0M7 15c5-5 13-5 18 0M12 20c2-2 6-2 8 0" fill="none" stroke="#111" stroke-width="2.300"/><circle cx="16" cy="25" r="2.500" fill="#111"/></svg>
          <svg class="speaker" width="30" height="24" viewBox="0 0 30 24"><path d="M1 8h5l8-6v20l-8-6H1z" fill="none" stroke="#111" stroke-width="2"/><path d="M20 8l8 8M28 8l-8 8" stroke="#111" stroke-width="2"/></svg>
          <svg class="batt" width="32" height="28" viewBox="0 0 32 28"><path d="M3 0v6M8 0v6M1 6h10v6H7v8H5v-8H1z" fill="#111" stroke="#111" stroke-width="1"/><rect x="13" y="5" width="16" height="20" fill="none" stroke="#111" stroke-width="2.500"/><rect x="16" y="9" width="8" height="13" fill="#111"/><rect x="29" y="11" width="3" height="8" fill="#111"/></svg>
          <div class="clock"><span>23:39</span><span>2023/9/30</span></div>
          <div class="badge">1</div>
          <div class="wm">CSDN @沙ya~</div>
        </div>
      </div>
    `;
  }
}
